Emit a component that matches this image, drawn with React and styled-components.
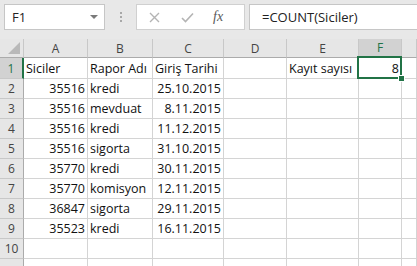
import React from 'react';
import styled, { createGlobalStyle } from 'styled-components';

const GREEN = '#217346';
const GRID = '#d4d4d4';

const GlobalStyle = createGlobalStyle`
  html, body {
    margin: 0;
    padding: 0;
    background: #fff;
    overflow: hidden;
  }
  body {
    font-family: "Open Sans", "Liberation Sans", sans-serif;
  }
`;

const Window = styled.div`
  width: 417px;
  height: 266px;
  overflow: hidden;
`;

const Toolbar = styled.div`
  display: flex;
  align-items: flex-start;
  height: 39px;
  padding: 4px 0 0 4px;
  box-sizing: border-box;
  background: #e8e8e8;
`;

const NameBox = styled.div`
  width: 101px;
  height: 26px;
  box-sizing: border-box;
  background: #fff;
  border: 1px solid #c6c6c6;
  display: flex;
  align-items: center;
  justify-content: space-between;
  padding: 0 6px 0 7px;
  font-size: 13px;
  color: #222;
`;

const Caret = styled.span`
  width: 0;
  height: 0;
  border-left: 4px solid transparent;
  border-right: 4px solid transparent;
  border-top: 4px solid #7a7a7a;
`;

const Grip = styled.div`
  width: 31px;
  height: 26px;
  display: flex;
  flex-direction: column;
  align-items: center;
  justify-content: center;
  gap: 2px;

  span {
    width: 2px;
    height: 2px;
    background: #a8a8a8;
  }
`;

const ActionBox = styled.div`
  width: 109px;
  height: 26px;
  box-sizing: border-box;
  background: #fff;
  border: 1px solid #d0d0d0;
  display: flex;
  align-items: center;
  padding-left: 12px;
  gap: 21px;
`;

const Fx = styled.span`
  font-family: "Liberation Serif", "DejaVu Serif", serif;
  font-style: italic;
  font-size: 14px;
  color: #5a5a5a;
  margin-left: -2px;
`;

const FormulaBox = styled.div`
  flex: 1;
  height: 26px;
  margin-left: 4px;
  box-sizing: border-box;
  background: #fff;
  border: 1px solid #c6c6c6;
  border-right: none;
  display: flex;
  align-items: center;
  padding-left: 12px;
  font-size: 13px;
  color: #222;
`;

const Sheet = styled.div`
  display: grid;
  grid-template-columns: 24px 64px 65px 71px 63px 72px 43px 1fr;
  grid-template-rows: 19px 21px;
  grid-auto-rows: 20px;
  font-size: 12.5px;
  color: #111;
`;

const Corner = styled.div`
  background: #e6e6e6;
  border-right: 1px solid #c8c8c8;
  border-bottom: 1px solid #ababab;
  box-sizing: border-box;
  display: flex;
  align-items: flex-end;
  justify-content: flex-end;
  padding: 0 3px 3px 0;
`;

const ColHead = styled.div`
  background: ${p => (p.$active ? '#d2d2d2' : '#e6e6e6')};
  color: ${p => (p.$active ? GREEN : '#444')};
  border-right: 1px solid #c8c8c8;
  border-bottom: ${p => (p.$active ? `2px solid ${GREEN}` : '1px solid #ababab')};
  box-sizing: border-box;
  display: flex;
  align-items: center;
  justify-content: center;
  font-size: 12px;
`;

const RowHead = styled.div`
  background: ${p => (p.$active ? '#d2d2d2' : '#e6e6e6')};
  color: ${p => (p.$active ? GREEN : '#444')};
  border-right: ${p => (p.$active ? `2px solid ${GREEN}` : '1px solid #ababab')};
  border-bottom: 1px solid #c8c8c8;
  box-sizing: border-box;
  display: flex;
  align-items: center;
  justify-content: center;
  font-size: 12px;
  white-space: nowrap;
`;

const Cell = styled.div`
  position: relative;
  border-right: 1px solid ${GRID};
  border-bottom: 1px solid ${GRID};
  box-sizing: border-box;
  display: flex;
  align-items: center;
  justify-content: ${p => (p.$right ? 'flex-end' : 'flex-start')};
  padding: 0 2px 0 2px;
  white-space: nowrap;
  overflow: visible;
  z-index: ${p => (p.$selected ? 2 : 'auto')};

  ${p => p.$selected && `
    &::after {
      content: '';
      position: absolute;
      left: -2px;
      top: -2px;
      right: -1px;
      bottom: -1px;
      border: 2px solid ${GREEN};
      pointer-events: none;
    }
  `}
`;

const Handle = styled.span`
  position: absolute;
  right: -4px;
  bottom: -4px;
  width: 5px;
  height: 5px;
  background: ${GREEN};
  border: 1px solid #fff;
  z-index: 3;
`;

// G is only a sliver at the right edge; its letter is off-screen
const columns = ['A', 'B', 'C', 'D', 'E', 'F', ''];

const records = [
  ['35516', 'kredi', '25.10.2015'],
  ['35516', 'mevduat', '8.11.2015'],
  ['35516', 'kredi', '11.12.2015'],
  ['35516', 'sigorta', '31.10.2015'],
  ['35770', 'kredi', '30.11.2015'],
  ['35770', 'komisyon', '12.11.2015'],
  ['36847', 'sigorta', '29.11.2015'],
  ['35523', 'kredi', '16.11.2015'],
];

const CrossIcon = () => (
  <svg width="11" height="11" viewBox="0 0 11 11">
    <path d="M1 1 L10 10 M10 1 L1 10" stroke="#b4b4b4" strokeWidth="1.4" fill="none" />
  </svg>
);

const CheckIcon = () => (
  <svg width="13" height="11" viewBox="0 0 13 11">
    <path d="M1 6 L4.5 9.5 L12 1.5" stroke="#b4b4b4" strokeWidth="1.6" fill="none" />
  </svg>
);

const CornerMark = () => (
  <svg width="12" height="12" viewBox="0 0 12 12">
    <polygon points="12,0 12,12 0,12" fill="#b9b9b9" />
  </svg>
);

const emptyRow = ['', '', '', '', '', '', ''];

// rows 1-10 are labelled; an 11th unlabelled row peeks in at the bottom edge
const sheetRows = [
  { label: '1', cells: ['Siciler', 'Rapor Adı', 'Giriş Tarihi', '', 'Kayıt sayısı', '8', ''] },
  ...records.map((r, i) => ({ label: String(i + 2), cells: [r[0], r[1], r[2], '', '', '', ''] })),
  { label: '10', cells: emptyRow },
  { label: '', cells: emptyRow },
];

const rightAligned = (row, c) => (row > 0 && (c === 0 || c === 2)) || (row === 0 && c === 5);

export default function App() {
  return (
    <Window>
      <GlobalStyle />
      <Toolbar>
        <NameBox>
          F1
          <Caret />
        </NameBox>
        <Grip>
          <span />
          <span />
          <span />
        </Grip>
        <ActionBox>
          <CrossIcon />
          <CheckIcon />
          <Fx>fx</Fx>
        </ActionBox>
        <FormulaBox>=COUNT(Siciler)</FormulaBox>
      </Toolbar>
      <Sheet>
        <Corner>
          <CornerMark />
        </Corner>
        {columns.map((c, i) => (
          <ColHead key={i} $active={c === 'F'}>{c}</ColHead>
        ))}
        {sheetRows.map((row, r) => (
          <React.Fragment key={r}>
            <RowHead $active={r === 0}>{row.label}</RowHead>
            {row.cells.map((v, c) => {
              const selected = r === 0 && c === 5;
              return (
                <Cell key={c} $right={rightAligned(r, c)} $selected={selected}>
                  {v}
                  {selected && <Handle />}
                </Cell>
              );
            })}
          </React.Fragment>
        ))}
      </Sheet>
    </Window>
  );
}
